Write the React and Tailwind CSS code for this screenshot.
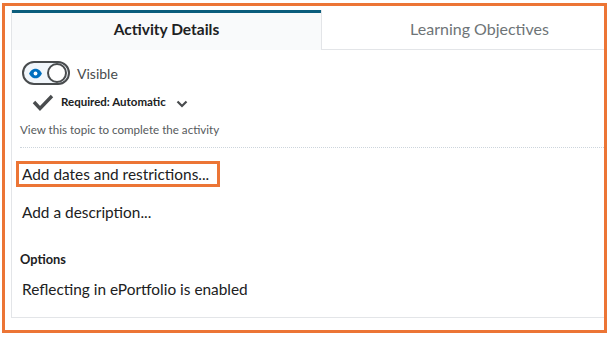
export default function App() {
  return (
    <div className="w-[610px] h-[337px] bg-white overflow-hidden" style={{ fontFamily: 'Lato, "Open Sans", sans-serif' }}>
      <div className="relative ml-[2px] mt-[3px] w-[605px] h-[330px] border-[3px] border-[#ec7535] pl-[6px] pt-[4px] overflow-hidden">
        <div className="h-[308px] border-l border-b border-[#e3e5e8] w-[626px]">
          <div className="flex h-[40px]">
            <div className="w-[309px] border-t-[3px] border-[#0b5d7c] bg-[#f9fafb] flex items-center justify-center pb-[3px] text-[15.5px] font-bold text-[#202122]">
              Activity Details
            </div>
            <div className="flex-1 border-l border-b border-[#e3e5e8] bg-white flex items-center justify-center pb-[2px] text-[16px] text-[#6e7477]">
              Learning Objectives
            </div>
          </div>
          <div className="pl-2 w-[596px]">
            <div className="flex items-center mt-[11px] ml-[2px]">
              <div className="w-[48px] h-[24px] rounded-full border-2 border-[#494c4e] bg-[#f1f6fb] flex items-center justify-between pl-[4px] pr-[1px]">
                <svg width="15" height="11" viewBox="0 0 14 10">
                  <path d="M1 5 C3 1.2 5 0.5 7 0.5 C9 0.5 11 1.2 13 5 C11 8.8 9 9.5 7 9.5 C5 9.5 3 8.8 1 5 Z" fill="#006fbf" />
                  <circle cx="7" cy="5" r="1.8" fill="#ffffff" />
                </svg>
                <div className="w-[20px] h-[20px] rounded-full bg-white border-2 border-[#494c4e]" />
              </div>
              <span className="ml-[7px] text-[14px] text-[#494c4e]">Visible</span>
            </div>
            <div className="flex items-center mt-[8px] ml-[12px]">
              <svg width="22" height="18" viewBox="0 0 22 18">
                <polyline points="2,9 8,15.5 20,3" fill="none" stroke="#494c4e" strokeWidth="3.4" strokeLinejoin="miter" />
              </svg>
              <span className="ml-[7px] text-[11.5px] font-bold text-[#202122]">Required: Automatic</span>
              <svg className="ml-[10px] mt-[3px]" width="12" height="8" viewBox="0 0 12 8">
                <polyline points="1.5,1.5 6,6 10.5,1.5" fill="none" stroke="#494c4e" strokeWidth="2.2" />
              </svg>
            </div>
            <div className="mt-[10px] text-[11.6px] text-[#565a5c]">View this topic to complete the activity</div>
            <div className="mt-[9px] border-t border-dotted border-[#cdd5dc]" />
            <div className="mt-[13px] ml-[-4px] w-[204px] h-[26px] border-[3px] border-[#ec7535] flex items-center pl-[3px] text-[15.4px] text-[#202122]">
              Add dates and restrictions...
            </div>
            <div className="mt-[14px] ml-[2px] text-[15.4px] text-[#202122]">Add a description...</div>
            <div className="mt-[25px] text-[12.8px] font-bold text-[#202122]">Options</div>
            <div className="mt-[9px] ml-[2px] text-[15.4px] text-[#202122]">Reflecting in ePortfolio is enabled</div>
          </div>
        </div>
      </div>
    </div>
  )
}
